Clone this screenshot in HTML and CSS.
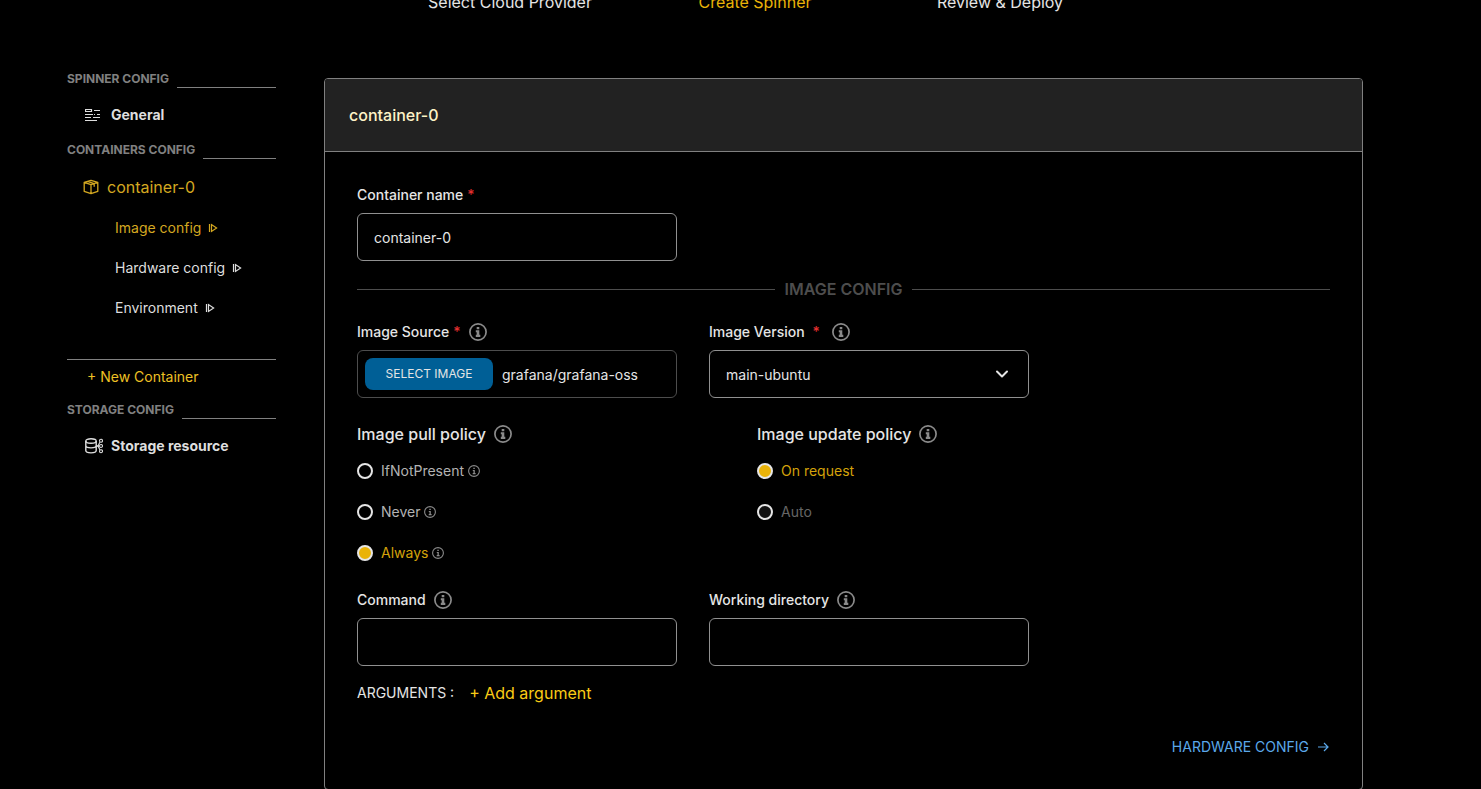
FILE: index.html
```
<!DOCTYPE html>
<html lang="en">
<head>
    <meta charset="UTF-8">
    <meta name="viewport" content="width=device-width, initial-scale=1.0">
    <title>Create Spinner</title>
    <link rel="stylesheet" href="styles.css">
</head>
<body>
<!-- Shared icons -->
<svg class="sprite" aria-hidden="true">
    <symbol id="info" viewBox="0 0 18 18">
        <circle cx="9" cy="9" r="8.1" fill="none" stroke="currentColor" stroke-width="1.7"/>
        <path d="M7.7 4h2.6v2.2H7.7zM6.8 7.3h3.5v4.5h1V14H6.8v-2.2h.9V9.2h-.9z" fill="currentColor"/>
    </symbol>
    <symbol id="info-small" viewBox="0 0 12 12">
        <circle cx="6" cy="6" r="5.4" fill="none" stroke="currentColor" stroke-width="1.1"/>
        <path d="M5.3 2.7h1.5v1.4H5.3zM4.8 5h2v3.1h.8v1.1H4.7V8.1h.8V6h-.7z" fill="currentColor"/>
    </symbol>
    <symbol id="play" viewBox="0 0 10 10">
        <path d="M1.5 1v8M3.5 1.6v6.8L8.6 5z" fill="none" stroke="currentColor" stroke-width="1.2"/>
    </symbol>
</svg>

<ol class="steps">
    <li>Select Cloud Provider</li>
    <li class="current">Create Spinner</li>
    <li>Review &amp; Deploy</li>
</ol>

<div class="layout">
    <nav class="sidebar">
        <h2>SPINNER CONFIG</h2>
        <a class="section-link" href="#general">
            <svg width="16" height="16" viewBox="0 0 16 16" fill="none" stroke="currentColor" stroke-width="1.2">
                <path d="M.5 2.5h6v2h-6zM9 3.5h6M0 7.5h8M9 7.5h1M12 7.5h3M0 10.5h6M8 10.5h7M0 13.5h12"/>
            </svg>
            General
        </a>
        <h2>CONTAINERS CONFIG</h2>
        <a class="container-link" href="#container-0">
            <svg width="16" height="16" viewBox="0 0 16 16" fill="none" stroke="currentColor" stroke-width="1.3" stroke-linejoin="round">
                <path d="M8 1.3l6.8 2v9L8 14.7l-6.8-2.4v-9zM1.2 3.3L8 5.7l6.8-2.4M8 5.7v9M4.5 2.4l6.7 2.3v3"/>
            </svg>
            container-0
        </a>
        <ul class="sub-links">
            <li><a class="active" href="#image">Image config <svg width="10" height="10"><use href="#play"/></svg></a></li>
            <li><a href="#hardware">Hardware config <svg width="10" height="10"><use href="#play"/></svg></a></li>
            <li><a href="#environment">Environment <svg width="10" height="10"><use href="#play"/></svg></a></li>
        </ul>
        <div class="new-container">
            <button type="button">+ New Container</button>
        </div>
        <h2>STORAGE CONFIG</h2>
        <a class="section-link storage" href="#storage">
            <svg width="18" height="16" viewBox="0 0 18 16" fill="none" stroke="currentColor" stroke-width="1.4">
                <ellipse cx="6" cy="3" rx="5.2" ry="2.2"/>
                <path d="M.8 3v9.6c0 1.3 2.3 2.3 5.2 2.3s5.2-1 5.2-2.3V3M.8 7.6c0 1.3 2.3 2.3 5.2 2.3s5.2-1 5.2-2.3M11 8h3"/>
                <g stroke-width="1.1"><circle cx="16" cy="2.8" r="1.5"/><circle cx="16" cy="8" r="1.5"/><circle cx="16" cy="13.2" r="1.5"/>
                <path d="M15 4l-2 4 2 4"/></g>
            </svg>
            Storage resource
        </a>
    </nav>

    <main class="card">
        <h1>container-0</h1>
        <form class="card-body">
            <div class="field">
                <label for="name">Container name <span class="required">*</span></label>
                <input type="text" id="name" value="container-0">
            </div>

            <h3 class="divider">IMAGE CONFIG</h3>

            <div class="row">
                <div class="field">
                    <label for="source">Image Source <span class="required">*</span> <svg class="info" width="18" height="18"><use href="#info"/></svg></label>
                    <div class="image-box">
                        <button type="button">SELECT IMAGE</button>
                        <input type="text" id="source" value="grafana/grafana-oss">
                    </div>
                </div>
                <div class="field">
                    <label class="version" for="version">Image Version <span class="required">*</span> <svg class="info" width="18" height="18"><use href="#info"/></svg></label>
                    <div class="select-box">
                        <select id="version">
                            <option>main-ubuntu</option>
                        </select>
                        <svg class="chevron" width="14" height="10" viewBox="0 0 14 10" fill="none" stroke="currentColor" stroke-width="2" stroke-linecap="round" stroke-linejoin="round"><path d="M2 2.5l5 5 5-5"/></svg>
                    </div>
                </div>
            </div>

            <div class="policies">
                <fieldset>
                    <legend>Image pull policy <svg class="info" width="18" height="18"><use href="#info"/></svg></legend>
                    <label><input type="radio" name="pull"><span>IfNotPresent</span> <svg class="info" width="12" height="12"><use href="#info-small"/></svg></label>
                    <label><input type="radio" name="pull"><span>Never</span> <svg class="info" width="12" height="12"><use href="#info-small"/></svg></label>
                    <label><input type="radio" name="pull" checked><span>Always</span> <svg class="info" width="12" height="12"><use href="#info-small"/></svg></label>
                </fieldset>
                <fieldset>
                    <legend>Image update policy <svg class="info" width="18" height="18"><use href="#info"/></svg></legend>
                    <label><input type="radio" name="update" checked><span>On request</span></label>
                    <label><input type="radio" name="update" disabled><span>Auto</span></label>
                </fieldset>
            </div>

            <div class="row">
                <div class="field">
                    <label for="command">Command <svg class="info" width="18" height="18"><use href="#info"/></svg></label>
                    <input type="text" id="command">
                </div>
                <div class="field">
                    <label for="directory">Working directory <svg class="info" width="18" height="18"><use href="#info"/></svg></label>
                    <input type="text" id="directory">
                </div>
            </div>

            <div class="arguments">
                <span>ARGUMENTS :</span>
                <button type="button">+ Add argument</button>
            </div>

            <a class="next" href="#hardware">
                HARDWARE CONFIG
                <svg width="11" height="12" viewBox="0 0 11 12" fill="none" stroke="currentColor" stroke-width="1.2"><path d="M0 6h10M6 2l4 4-4 4"/></svg>
            </a>
        </form>
    </main>
</div>
</body>
</html>
```
FILE: styles.css
```
/* General Styles */
* {
    box-sizing: border-box;
}

body {
    margin: 0;
    background-color: #000;
    color: #e5e5e5;
    font-family: Inter, sans-serif;
    font-size: 14px;
    line-height: 24px;
    overflow-x: hidden;
}

h1, h2, h3, ul, ol, fieldset {
    margin: 0;
    padding: 0;
    border: 0;
    list-style: none;
}

a {
    color: inherit;
    text-decoration: none;
}

button, input, select {
    font: inherit;
    color: inherit;
    background: none;
    border: 0;
    padding: 0;
}

button {
    cursor: pointer;
}

svg {
    flex-shrink: 0;
}

.sprite {
    display: none;
}

/* Steps, scrolled partly out of view */
.steps {
    display: grid;
    grid-template-columns: repeat(3, 245px);
    justify-content: center;
    margin-top: -10px;
    padding-left: 29px;
    font-size: 16px;
    text-align: center;
}

.steps .current {
    color: #eab308;
}

/* Page layout */
.layout {
    display: flex;
    align-items: flex-start;
    gap: 48px;
    padding: 64px 118px 0 67px;
}

/* Sidebar */
.sidebar {
    width: 209px;
    flex-shrink: 0;
    color: #dedede;
}

.sidebar h2 {
    display: flex;
    gap: 8px;
    height: 20px;
    margin-top: -10px;
    color: #808080;
    font-size: 12px;
    line-height: 22px;
}

.sidebar h2::after {
    content: "";
    flex: 1;
    border-bottom: 1px solid #808080;
}

.sidebar a {
    display: flex;
    align-items: center;
    gap: 8px;
}

.sidebar .section-link {
    gap: 10px;
    padding: 15px 0 22px 18px;
    font-weight: 700;
}

.sidebar .storage {
    gap: 8px;
}

.sidebar .container-link {
    padding: 16px 0 9px 16px;
    color: #d4a820;
    font-size: 16px;
}

.sub-links {
    padding-left: 48px;
    line-height: 40px;
}

.sidebar .sub-links a {
    gap: 7px;
}

.sub-links .active {
    color: #d4a820;
}

.new-container {
    margin: 31px 0 20px;
    padding: 5px 0 0 20px;
    border-top: 1px solid #808080;
    color: #eec124;
}

/* Card */
.card {
    flex: 1;
    border: 1px solid #808080;
    border-radius: 4px;
}

.card h1 {
    padding: 24px;
    background-color: #222;
    border-bottom: 1px solid #808080;
    border-radius: 3px 3px 0 0;
    color: #fef3c7;
    font-size: 16px;
    font-weight: 500;
}

.card-body {
    display: flex;
    flex-direction: column;
    padding: 33px 32px 30px;
}

/* Fields */
.row {
    display: flex;
    gap: 32px;
}

.field {
    width: 320px;
}

.field label {
    display: flex;
    align-items: center;
    gap: 4px;
    margin-bottom: 8px;
    font-weight: 500;
    line-height: 20px;
}

.info {
    color: #8a8a8a;
}

.field label .info {
    margin-left: 4px;
}

.field .version {
    gap: 8px;
}

.required {
    color: #e02f2f;
}

.field input, .field select {
    display: block;
    width: 100%;
    height: 48px;
    padding: 0 16px;
    border: 1px solid #909090;
    border-radius: 6px;
}

.field .image-box {
    display: flex;
    align-items: center;
    gap: 9px;
    height: 48px;
    padding: 0 7px;
    border: 1px solid #4d4d4d;
    border-radius: 6px;
}

.image-box button {
    flex: 0 0 128px;
    height: 32px;
    background-color: #005f96;
    border-radius: 8px;
    font-size: 12px;
}

.field .image-box input {
    flex: 1;
    min-width: 0;
    padding: 0;
    border: 0;
}

.select-box {
    position: relative;
}

.field select {
    appearance: none;
    padding-top: 2px;
    background-color: #000;
}

.chevron {
    position: absolute;
    top: 19px;
    right: 20px;
    pointer-events: none;
}

.divider {
    display: flex;
    align-items: center;
    gap: 10px;
    margin: 16px 0 21px;
    color: #4d4d4d;
    font-size: 16px;
    font-weight: 600;
}

.divider::before, .divider::after {
    content: "";
    flex: 1;
    border-top: 1px solid #4d4d4d;
}

/* Policies */
.policies {
    display: flex;
    margin: 24px 0 17px;
}

.policies fieldset {
    width: 400px;
}

.policies legend {
    display: flex;
    align-items: center;
    gap: 8px;
    padding: 0 0 4px;
    font-size: 16px;
    font-weight: 500;
}

.policies label {
    display: flex;
    align-items: center;
    gap: 4px;
    height: 41px;
    color: #b3b3b3;
}

.policies input {
    appearance: none;
    width: 16px;
    height: 16px;
    margin: 0 4px 0 0;
    border: 2px solid #e5e5e5;
    border-radius: 50%;
}

.policies input:checked {
    background-color: #eab308;
}

.policies input:checked + span {
    color: #d4a20a;
}

.policies input:disabled {
    background-color: #111;
}

.policies input:disabled + span {
    color: #666;
}

/* Arguments and next step */
.arguments {
    display: flex;
    gap: 15px;
    margin: 15px 0 30px;
}

.arguments button {
    color: #facc15;
    font-size: 16px;
}

.next {
    display: flex;
    align-items: center;
    align-self: flex-end;
    gap: 9px;
    padding-right: 1px;
    color: #5ba8ea;
}
```
